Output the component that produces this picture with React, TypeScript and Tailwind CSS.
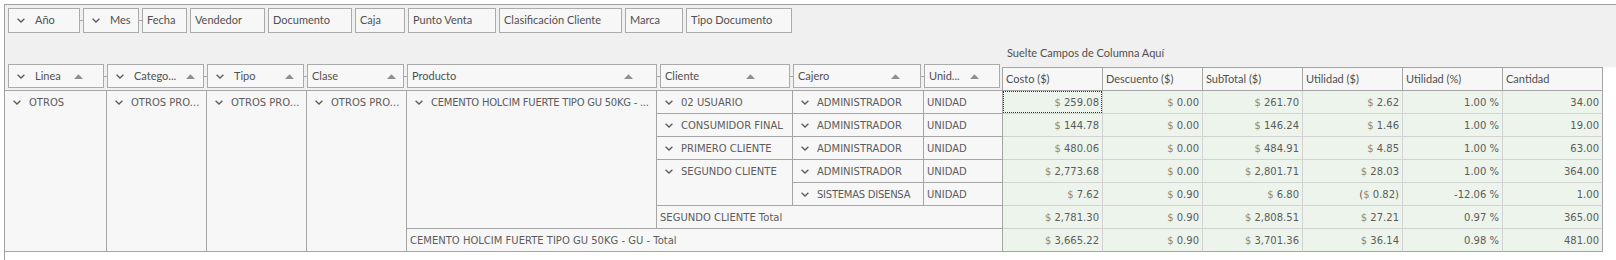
import React from 'react';

const Chevron = () => (
  <svg width="8" height="5" viewBox="0 0 8 5" className="shrink-0">
    <path d="M0.6 0.7 L4 4 L7.4 0.7" fill="none" stroke="#5a5a5a" strokeWidth="1.3" />
  </svg>
);

const SortUp = () => (
  <svg width="9" height="5" viewBox="0 0 9 5" className="shrink-0">
    <path d="M0 5 L4.5 0.2 L9 5 Z" fill="#8f8f8f" />
  </svg>
);

interface Field {
  label: string;
  w: string;
  chevron?: boolean;
  link?: boolean;
  pr?: string;
}

const filterFields: Field[] = [
  { label: 'Año', w: 'w-[72px]', chevron: true, link: true },
  { label: 'Mes', w: 'w-[56px]', chevron: true, link: true },
  { label: 'Fecha', w: 'w-[45px]' },
  { label: 'Vendedor', w: 'w-[75px]' },
  { label: 'Documento', w: 'w-[84px]' },
  { label: 'Caja', w: 'w-[50px]' },
  { label: 'Punto Venta', w: 'w-[88px]' },
  { label: 'Clasificación Cliente', w: 'w-[123px]' },
  { label: 'Marca', w: 'w-[58px]' },
  { label: 'Tipo Documento', w: 'w-[106px]' },
];

const rowFields: Field[] = [
  { label: 'Linea', w: 'w-[96px]', chevron: true, link: true, pr: 'pr-[20px]' },
  { label: 'Catego...', w: 'w-[97px]', chevron: true, link: true, pr: 'pr-[8px]' },
  { label: 'Tipo', w: 'w-[97px]', chevron: true, link: true, pr: 'pr-[9px]' },
  { label: 'Clase', w: 'w-[97px]', link: true, pr: 'pr-[7px]' },
  { label: 'Producto', w: 'w-[250px]', link: true, pr: 'pr-[23px]' },
  { label: 'Cliente', w: 'w-[130px]', link: true, pr: 'pr-[34px]' },
  { label: 'Cajero', w: 'w-[128px]', link: true, pr: 'pr-[20px]' },
  { label: 'Unid...', w: 'w-[76px]', pr: 'pr-[20px]' },
];

const dataHeaders = ['Costo ($)', 'Descuento ($)', 'SubTotal ($)', 'Utilidad ($)', 'Utilidad (%)', 'Cantidad'];

// [costo, descuento, subtotal, utilidad, utilidad %, cantidad]
const dataRows: string[][] = [
  ['259.08', '0.00', '261.70', '2.62', '1.00 %', '34.00'],
  ['144.78', '0.00', '146.24', '1.46', '1.00 %', '19.00'],
  ['480.06', '0.00', '484.91', '4.85', '1.00 %', '63.00'],
  ['2,773.68', '0.00', '2,801.71', '28.03', '1.00 %', '364.00'],
  ['7.62', '0.90', '6.80', '(0.82)', '-12.06 %', '1.00'],
  ['2,781.30', '0.90', '2,808.51', '27.21', '0.97 %', '365.00'],
  ['3,665.22', '0.90', '3,701.36', '36.14', '0.98 %', '481.00'],
];

const headFont = "font-['Lato',sans-serif] text-[11px] text-[#505050]";
const bodyFont = "font-['DejaVu_Sans',sans-serif] text-[10px] text-[#5c5c5c]";

function FieldBox({ f, sort }: { f: Field; sort?: boolean }) {
  return (
    <div
      className={`${f.w} h-full shrink-0 flex items-center border border-[#ababab] bg-[#f7f7f7] ${f.chevron ? 'pl-[8px]' : 'pl-[4px]'} ${sort ? f.pr : ''}`}
    >
      {f.chevron && <Chevron />}
      <span className={`${f.chevron ? 'ml-[10px]' : ''} whitespace-nowrap ${headFont}`}>{f.label}</span>
      {sort && (
        <span className="ml-auto flex">
          <SortUp />
        </span>
      )}
    </div>
  );
}

function Spacer({ link }: { link?: boolean }) {
  return (
    <div className="w-[3px] shrink-0 flex items-center">
      {link && <div className="w-full h-px bg-[#a5a5a5]" />}
    </div>
  );
}

function Label({ text, chevron = true, tight }: { text: string; chevron?: boolean; tight?: boolean }) {
  return (
    <div className={`h-[22px] flex items-center whitespace-nowrap overflow-hidden ${chevron ? 'pl-[8px]' : 'pl-[3px]'} ${bodyFont}`}>
      {chevron && <Chevron />}
      <span className={`${chevron ? 'ml-[8px]' : ''} ${tight ? 'tracking-[-0.25px]' : ''}`}>{text}</span>
    </div>
  );
}

function Value({ v, col }: { v: string; col: number }) {
  const money = col < 4;
  if (!money) return <span>{v}</span>;
  if (v.startsWith('(')) {
    return (
      <span>
        (<span className="text-[#9d8a62]">$</span> {v.slice(1)}
      </span>
    );
  }
  return (
    <span>
      <span className="text-[#9d8a62]">$</span> {v}
    </span>
  );
}

const hdr = 'bg-[#f7f7f7] border-r border-b border-[#a5a5a5]';

export default function App() {
  return (
    <div className="w-[1616px] h-[260px] bg-white overflow-hidden pl-1 pt-1">
      <div className="h-full border-l border-t border-[#a0a0a0] flex flex-col">
        {/* filter / column drop area */}
        <div className="h-[59px] bg-[#f0f0f0] flex flex-col shrink-0">
          <div className="flex h-[28px] pt-[3px] pl-[3px]">
            {filterFields.map((f, i) => (
              <React.Fragment key={f.label}>
                {i > 0 && <Spacer link={filterFields[i - 1].link} />}
                <FieldBox f={f} />
              </React.Fragment>
            ))}
          </div>
          <div className={`mt-[13px] ml-[1002px] h-[14px] leading-[14px] ${headFont}`}>Suelte Campos de Columna Aquí</div>
        </div>

        {/* row field headers + data headers */}
        <div className="h-[26px] flex shrink-0">
          <div className="w-[997px] shrink-0 bg-[#f0f0f0] flex pl-[3px] h-full">
            <div className="flex h-[24px]">
              {rowFields.map((f, i) => (
                <React.Fragment key={f.label}>
                  {i > 0 && <Spacer link={rowFields[i - 1].link} />}
                  <FieldBox f={f} sort />
                </React.Fragment>
              ))}
            </div>
          </div>
          <div className="flex-1 flex flex-col">
            <div className="h-[3px] bg-[#f0f0f0]" />
            <div className="flex h-[23px]">
              {dataHeaders.map((h, i) => (
                <div
                  key={h}
                  className={`${i === 5 ? 'w-[101px] border-r' : 'w-[100px]'} h-full border-l border-t border-[#a5a5a5] bg-[#f7f7f7] flex items-center pl-[3px] ${headFont}`}
                >
                  {h}
                </div>
              ))}
            </div>
          </div>
        </div>

        {/* pivot body */}
        <div className="w-[1598px] border-t border-[#a5a5a5]">
          <div className="grid grid-cols-[102px_100px_100px_100px_250px_136px_131px_79px_100px_100px_100px_100px_100px_100px] grid-rows-[repeat(7,23px)]">
            <div className={`${hdr} col-start-1 row-start-1 row-span-7`}>
              <Label text="OTROS" />
            </div>
            <div className={`${hdr} col-start-2 row-start-1 row-span-7`}>
              <Label text="OTROS PRO..." />
            </div>
            <div className={`${hdr} col-start-3 row-start-1 row-span-7`}>
              <Label text="OTROS PRO..." />
            </div>
            <div className={`${hdr} col-start-4 row-start-1 row-span-7`}>
              <Label text="OTROS PRO..." />
            </div>
            <div className={`${hdr} col-start-5 row-start-1 row-span-6`}>
              <Label text="CEMENTO HOLCIM FUERTE TIPO GU 50KG - ..." tight />
            </div>
            <div className={`${hdr} col-start-5 col-span-4 row-start-7`}>
              <Label text="CEMENTO HOLCIM FUERTE TIPO GU 50KG - GU - Total" chevron={false} />
            </div>

            <div className={`${hdr} col-start-6 row-start-1`}>
              <Label text="02 USUARIO" />
            </div>
            <div className={`${hdr} col-start-6 row-start-2`}>
              <Label text="CONSUMIDOR FINAL" />
            </div>
            <div className={`${hdr} col-start-6 row-start-3`}>
              <Label text="PRIMERO CLIENTE" />
            </div>
            <div className={`${hdr} col-start-6 row-start-4 row-span-2`}>
              <Label text="SEGUNDO CLIENTE" />
            </div>
            <div className={`${hdr} col-start-6 col-span-3 row-start-6`}>
              <Label text="SEGUNDO CLIENTE Total" chevron={false} />
            </div>

            <div className={`${hdr} col-start-7 row-start-1`}>
              <Label text="ADMINISTRADOR" />
            </div>
            <div className={`${hdr} col-start-7 row-start-2`}>
              <Label text="ADMINISTRADOR" />
            </div>
            <div className={`${hdr} col-start-7 row-start-3`}>
              <Label text="ADMINISTRADOR" />
            </div>
            <div className={`${hdr} col-start-7 row-start-4`}>
              <Label text="ADMINISTRADOR" />
            </div>
            <div className={`${hdr} col-start-7 row-start-5`}>
              <Label text="SISTEMAS DISENSA" tight />
            </div>

            <div className={`${hdr} col-start-8 row-start-1`}>
              <Label text="UNIDAD" chevron={false} />
            </div>
            <div className={`${hdr} col-start-8 row-start-2`}>
              <Label text="UNIDAD" chevron={false} />
            </div>
            <div className={`${hdr} col-start-8 row-start-3`}>
              <Label text="UNIDAD" chevron={false} />
            </div>
            <div className={`${hdr} col-start-8 row-start-4`}>
              <Label text="UNIDAD" chevron={false} />
            </div>
            <div className={`${hdr} col-start-8 row-start-5`}>
              <Label text="UNIDAD" chevron={false} />
            </div>

            {dataRows.map((row, r) =>
              row.map((v, c) => (
                <div
                  key={`${r}-${c}`}
                  className={`bg-[#ecf4ec] border-r border-b ${c === 5 ? 'border-r-[#a5a5a5]' : 'border-r-[#d2d2d2]'} ${r === 6 ? 'border-b-[#a5a5a5]' : 'border-b-[#d2d2d2]'} ${bodyFont}`}
                >
                  {r === 0 && c === 0 ? (
                    <div className="h-full border border-dotted border-[#333] flex items-center justify-end pr-[2px]">
                      <Value v={v} col={c} />
                    </div>
                  ) : (
                    <div className="h-full flex items-center justify-end pr-[3px]">
                      <Value v={v} col={c} />
                    </div>
                  )}
                </div>
              ))
            )}
          </div>
        </div>
      </div>
    </div>
  );
}
